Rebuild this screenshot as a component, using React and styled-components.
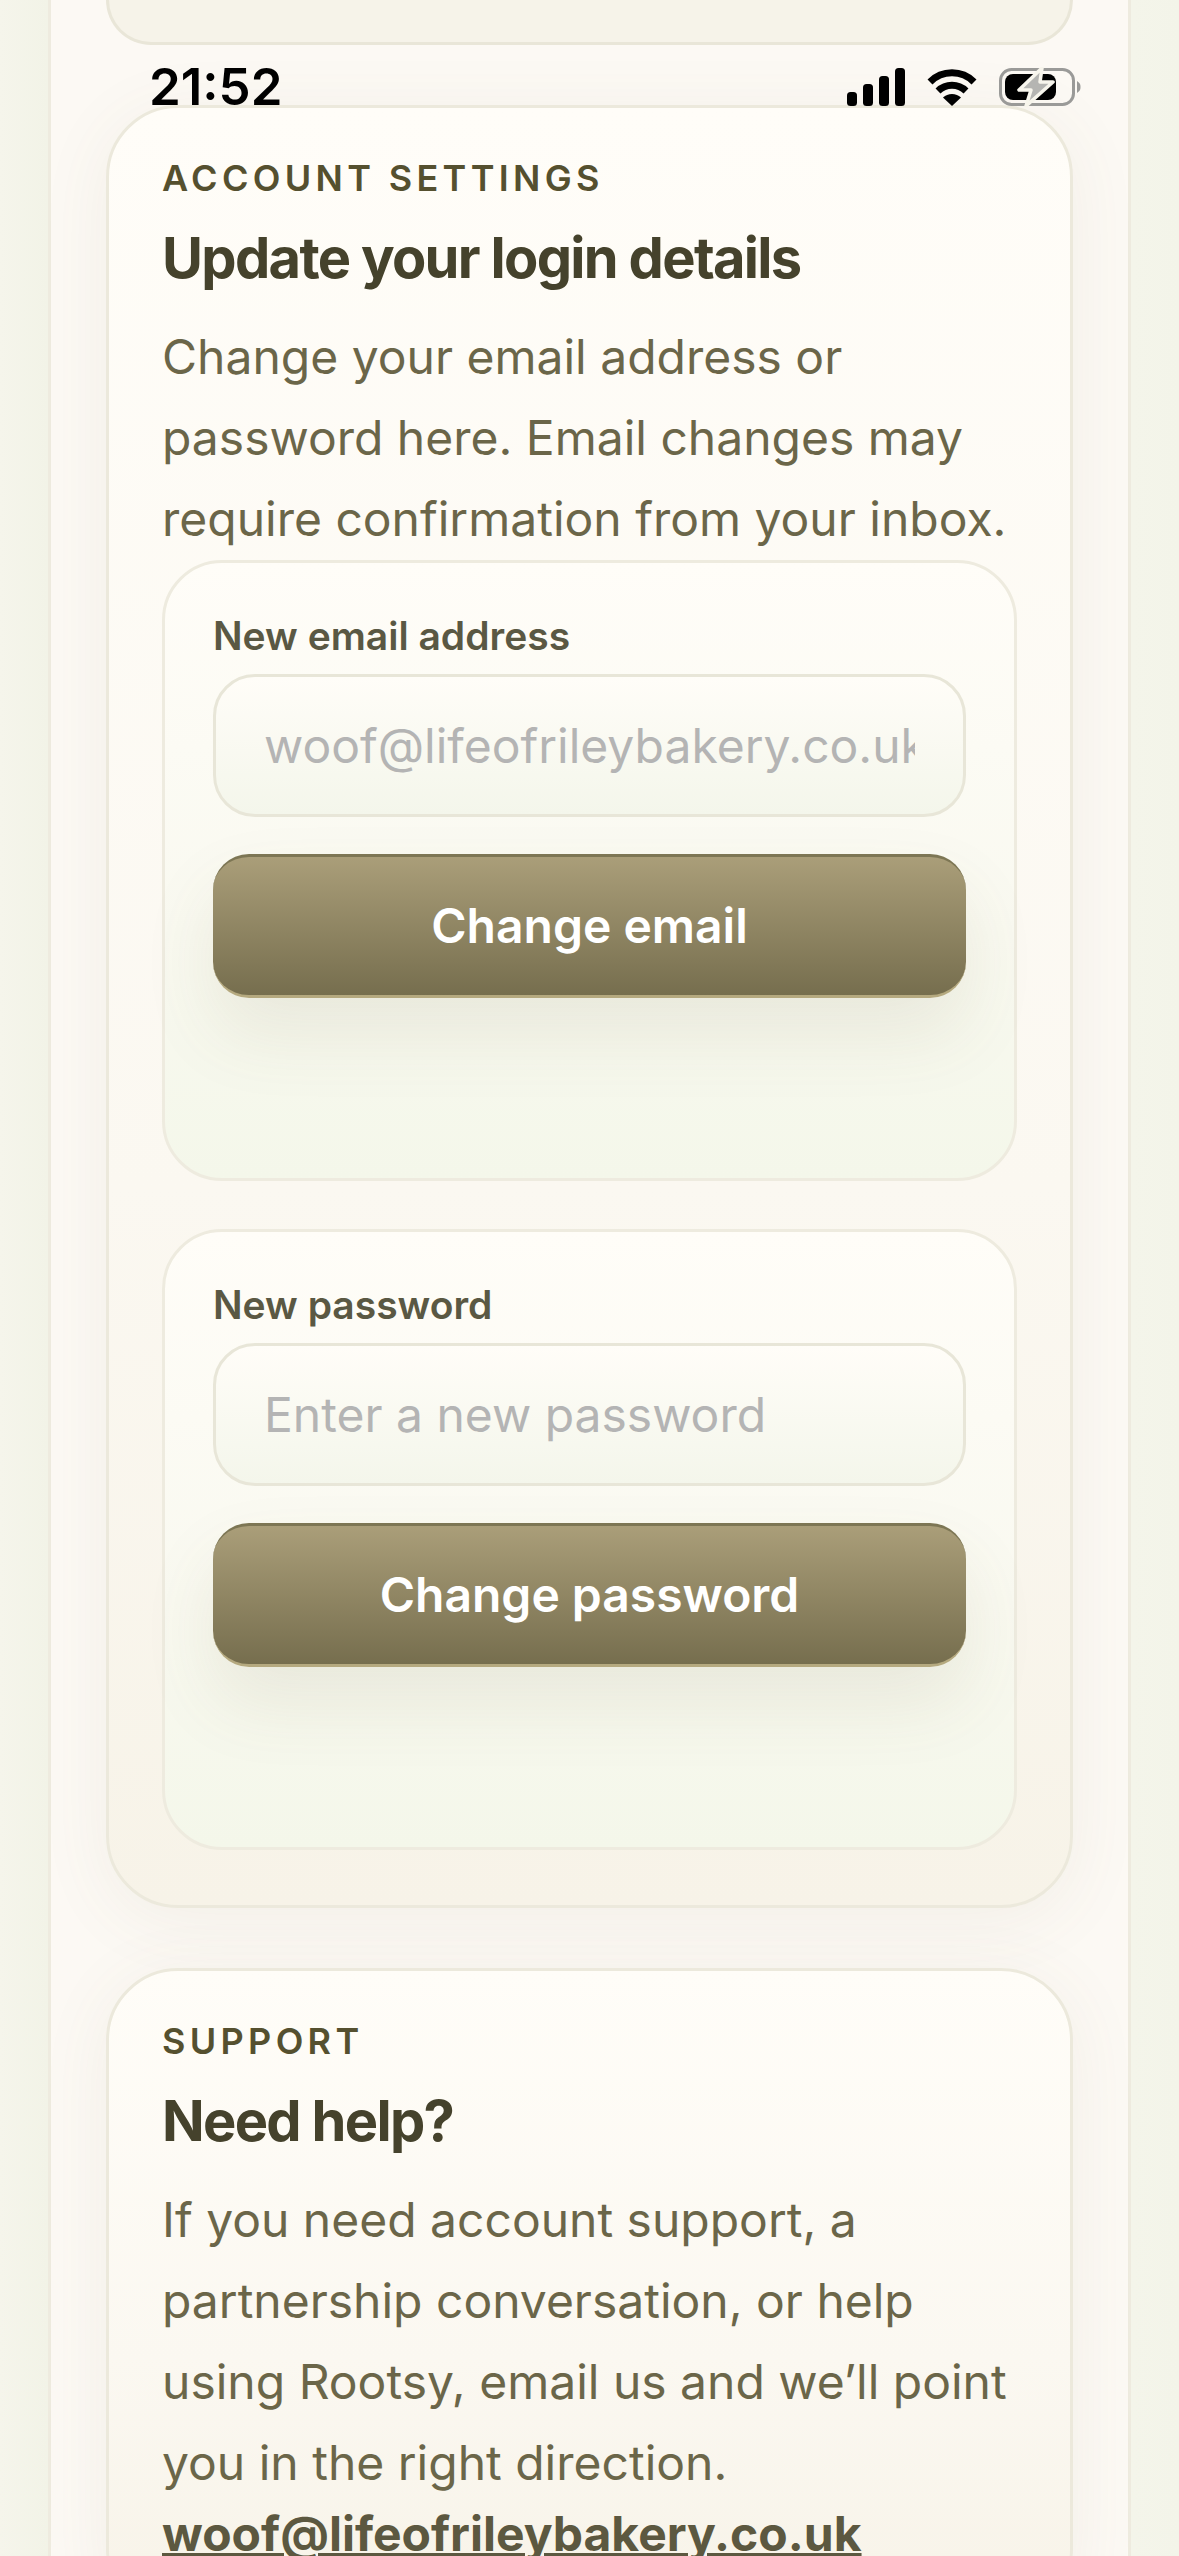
import React from 'react'
import styled, { createGlobalStyle } from 'styled-components'

const GlobalStyle = createGlobalStyle`
  html, body {
    margin: 0;
    padding: 0;
    background: #f3f4e9;
  }
  * { box-sizing: border-box; }
`

const Screen = styled.div`
  position: relative;
  width: 1179px;
  height: 2556px;
  overflow: hidden;
  font-family: Inter, "Liberation Sans", sans-serif;
  background: linear-gradient(90deg, #f5f5eb 0%, #f2f3e7 4%, #f4f5ea 96%, #f3f4e9 100%);
  padding: 0 48px;
`

const Panel = styled.main`
  min-height: 2556px;
  border-left: 3px solid #eeebdf;
  border-right: 3px solid #eeebdf;
  background: #fcf9f4;
  padding: 0 55px;
  display: flex;
  flex-direction: column;
  gap: 60px;
`

const PreviousCard = styled.div`
  height: 45px;
  border: 3px solid #e9e6d8;
  border-top: none;
  border-radius: 0 0 72px 72px;
  background: #f6f3e9;
`

const Card = styled.section`
  border: 3px solid #ece9dc;
  border-radius: 72px;
  padding: 43px 53px 54px;
  background: linear-gradient(180deg, #fffdf8 0%, #fbf8f1 60%, #f7f3e8 100%);
  box-shadow: 0 12px 72px rgba(110, 100, 70, 0.07);
`

const Eyebrow = styled.div`
  font-size: 36px;
  line-height: 54px;
  font-weight: 600;
  letter-spacing: 0.12em;
  color: #55502f;
  margin-bottom: 16px;
`

const Heading = styled.h2`
  margin: 0 0 21px;
  font-size: 56px;
  line-height: 74px;
  font-weight: 700;
  letter-spacing: -0.03em;
  color: #45422c;
`

const Body = styled.p`
  margin: 0;
  font-size: 48px;
  line-height: 81px;
  color: #6b6649;
`

const SupportLink = styled.a`
  display: block;
  font-size: 48px;
  line-height: 61px;
  font-weight: 700;
  color: #5c5840;
  text-decoration: underline;
  text-decoration-thickness: 3px;
`

const FormStack = styled.div`
  display: flex;
  flex-direction: column;
  gap: 48px;
  margin: 1px 0 1px;
`

const FormCard = styled.form`
  display: flex;
  flex-direction: column;
  border: 3px solid #eeebdf;
  border-radius: 60px;
  padding: 43px 48px 180px;
  background: linear-gradient(180deg, #fffdf8 0%, #f9f9f0 60%, #f4f7ea 100%);
`

const FieldLabel = styled.label`
  font-size: 39px;
  line-height: 60px;
  font-weight: 600;
  color: #5a5843;
  margin-bottom: 8px;
`

const TextInput = styled.input`
  display: block;
  width: 100%;
  height: 143px;
  border: 3px solid #e8e6d8;
  border-radius: 42px;
  padding: 0 48px;
  font-family: inherit;
  font-size: 48px;
  color: #45422c;
  background: linear-gradient(180deg, #fffdf8 0%, #f4f6eb 100%);
  outline: none;
  &::placeholder {
    color: #b4b4b4;
    opacity: 1;
  }
`

const SubmitButton = styled.button`
  height: 144px;
  margin-top: 37px;
  padding-bottom: 2px;
  border: none;
  border-top: 3px solid #7d7654;
  border-bottom: 3px solid #b5a97f;
  border-radius: 36px;
  font-family: inherit;
  font-size: 48px;
  font-weight: 600;
  color: #ffffff;
  background: linear-gradient(180deg, #aa9e79 0%, #766e4e 100%);
  box-shadow: 0 36px 72px rgba(110, 100, 60, 0.1);
`

const StatusBar = styled.div`
  position: absolute;
  top: 60px;
  left: 149px;
  width: 932px;
  height: 54px;
  display: flex;
  align-items: center;
  justify-content: space-between;
`

const Clock = styled.span`
  font-size: 51px;
  line-height: 54px;
  font-weight: 600;
  color: #000;
`

const StatusIcons = styled.div`
  display: flex;
  align-items: center;
  gap: 22px;
`

const SignalIcon = () => (
  <svg width="58" height="38" viewBox="0 0 58 38" fill="#000">
    <rect x="0" y="24" width="10" height="14" rx="3.5" />
    <rect x="16" y="16" width="10" height="22" rx="3.5" />
    <rect x="32" y="8" width="10" height="30" rx="3.5" />
    <rect x="48" y="0" width="10" height="38" rx="3.5" />
  </svg>
)

const WifiIcon = () => (
  <svg width="50" height="38" viewBox="0 0 50 38">
    <g fill="none" stroke="#000" strokeWidth="7">
      <path d="M3 14 A31 31 0 0 1 47 14" />
      <path d="M11 23 A20 20 0 0 1 39 23" />
    </g>
    <path d="M16 29.5 A13 13 0 0 1 34 29.5 L25 38 Z" fill="#000" />
  </svg>
)

const BatteryIcon = () => (
  <svg width="82" height="40" viewBox="0 0 82 40">
    <rect x="1.5" y="2.5" width="73" height="35" rx="11" fill="none" stroke="#9a9a98" strokeWidth="3" />
    <path d="M78 14 C81 16 81.5 17.5 81.5 20 C81.5 22.5 81 24 78 26 Z" fill="#9a9a98" />
    <rect x="6" y="7" width="51" height="26" rx="8" fill="#000" />
    <path d="M43 1 L20 23 L32 23 L27 39 L54 15 L41 15 Z" fill="#b5b5b2" stroke="#f7f5ec" strokeWidth="3.5" strokeLinejoin="round" />
  </svg>
)

const App = () => {
  return (
    <Screen>
      <GlobalStyle />
      <Panel>
        <PreviousCard />
        <Card>
          <Eyebrow>ACCOUNT SETTINGS</Eyebrow>
          <Heading>Update your login details</Heading>
          <Body>Change your email address or password here. Email changes may require confirmation from your inbox.</Body>
          <FormStack>
            <FormCard>
              <FieldLabel>New email address</FieldLabel>
              <TextInput type="email" placeholder="woof@lifeofrileybakery.co.uk" />
              <SubmitButton type="button">Change email</SubmitButton>
            </FormCard>
            <FormCard>
              <FieldLabel>New password</FieldLabel>
              <TextInput type="password" placeholder="Enter a new password" />
              <SubmitButton type="button">Change password</SubmitButton>
            </FormCard>
          </FormStack>
        </Card>
        <Card>
          <Eyebrow>SUPPORT</Eyebrow>
          <Heading>Need help?</Heading>
          <Body>If you need account support, a partnership conversation, or help using Rootsy, email us and we’ll point you in the right direction.</Body>
          <SupportLink href="#">woof@lifeofrileybakery.co.uk</SupportLink>
        </Card>
      </Panel>
      <StatusBar>
        <Clock>21:52</Clock>
        <StatusIcons>
          <SignalIcon />
          <WifiIcon />
          <BatteryIcon />
        </StatusIcons>
      </StatusBar>
    </Screen>
  )
}

export default App
